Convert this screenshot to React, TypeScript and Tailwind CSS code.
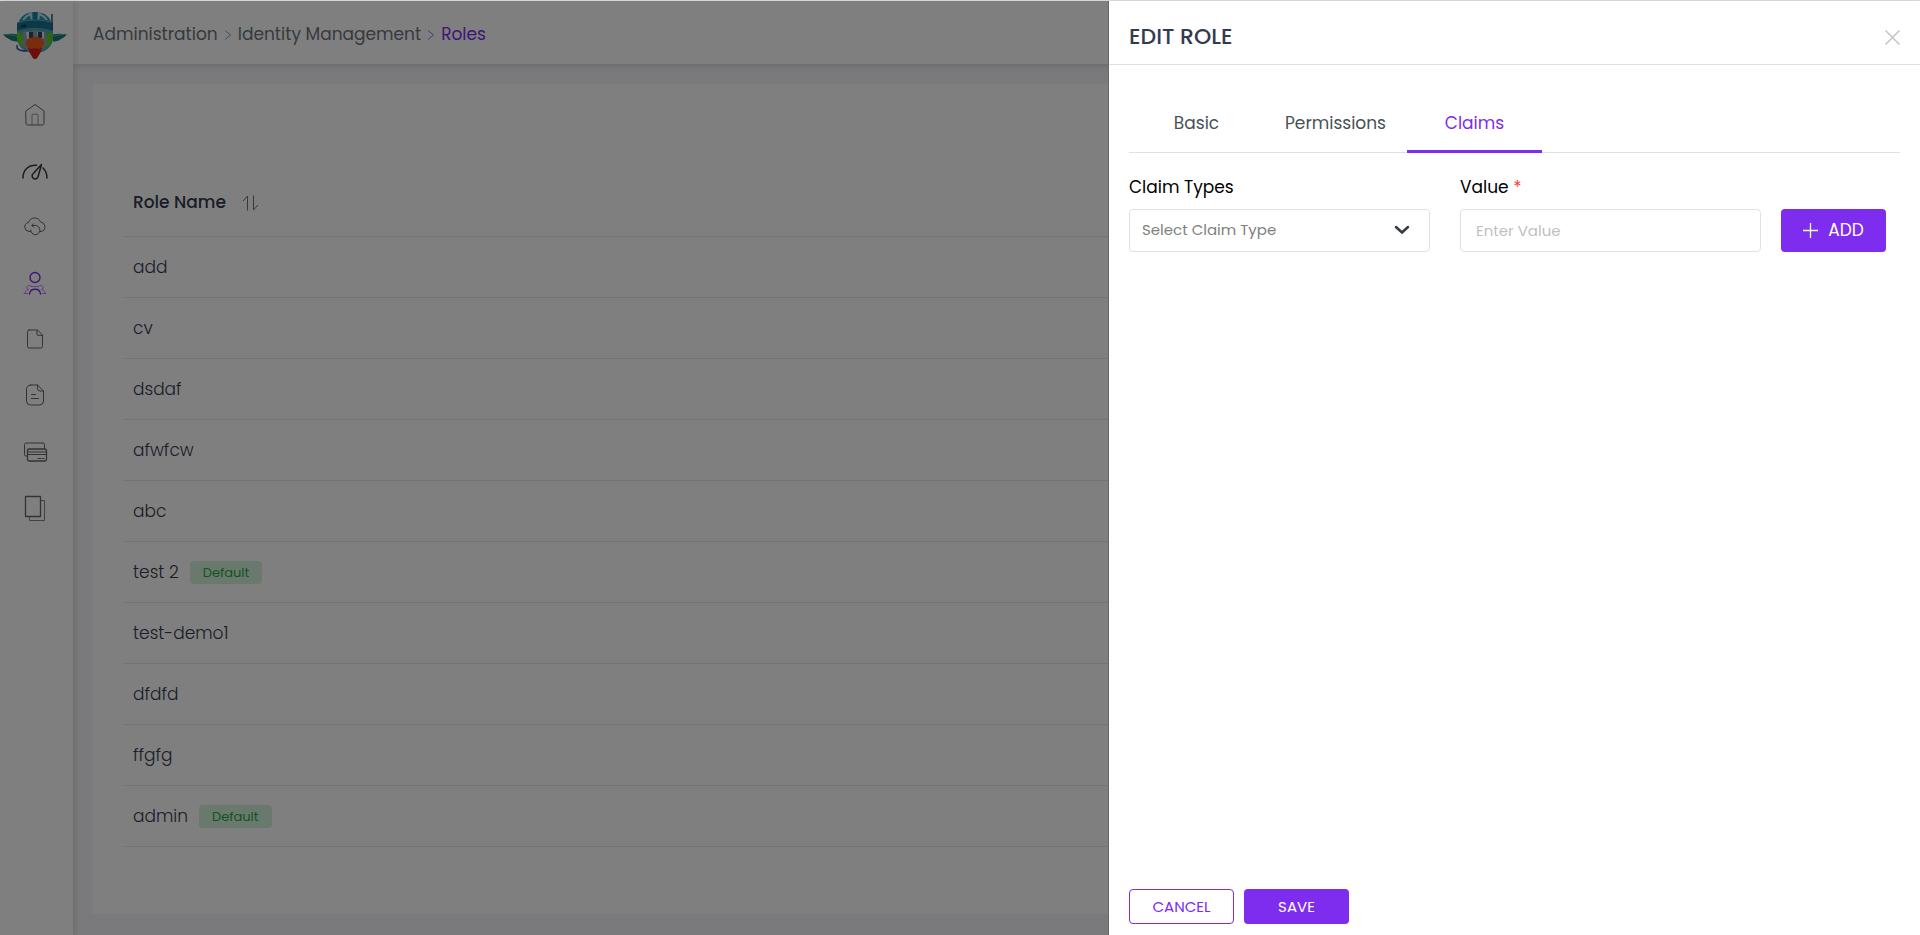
import { useState } from "react";
import type { ReactNode } from "react";

type Role = {
  name: string;
  isDefault?: boolean;
};

const roles: Role[] = [
  { name: "add" },
  { name: "cv" },
  { name: "dsdaf" },
  { name: "afwfcw" },
  { name: "abc" },
  { name: "test 2", isDefault: true },
  { name: "test-demo1" },
  { name: "dfdfd" },
  { name: "ffgfg" },
  { name: "admin", isDefault: true },
];

const tabs = ["Basic", "Permissions", "Claims"];

const navItems: { label: string; active?: boolean; icon: ReactNode }[] = [
  {
    label: "Home",
    icon: (
      <>
        <path d="M3 8 12 1.500l9 6.500V20.500a1.500 1.500 0 0 1-1.500 1.500h-15A1.500 1.500 0 0 1 3 20.500z" />
        <path d="M9 21.500V12a.8.8 0 0 1 .8-.8h4.400a.8.8 0 0 1 .8.8V21.500" opacity=".7" />
      </>
    ),
  },
  {
    label: "Dashboard",
    icon: (
      <g stroke="#383838" strokeWidth="1.500">
        <path d="M0 19C0 11 5 6 13.500 6.300" />
        <path d="M20 9c2.500 2.500 4 6 4 10" />
        <path d="M18.500 5.500 10.300 14.500a3 3 0 1 0 4.700 3.200z" />
      </g>
    ),
  },
  {
    label: "Backups",
    icon: (
      <>
        <path d="M7.500 16.500H6a4.500 4.500 0 0 1-.6-8.900A6.500 6.500 0 0 1 17.600 7 4.800 4.800 0 0 1 18 16.500h-1" />
        <path d="M9 10.500h3.500a4.600 4.600 0 1 1-4.800 4.500M10.500 8.800l-1.700 1.700 1.700 1.700" />
      </>
    ),
  },
  {
    label: "Administration",
    active: true,
    icon: (
      <>
        <circle cx="12" cy="6.500" r="5" strokeWidth="1.400" />
        <path d="M6.500 23c.4-3 2.500-4.700 5.500-4.700s5.100 1.700 5.500 4.700" strokeWidth="1.400" />
        <path
          d="M2 22.500c.3-2.600 1.500-4 3.800-4.200M22 22.500c-.3-2.600-1.500-4-3.800-4.200M4 18a2.500 2.500 0 0 1 4.500-2.300M20 18a2.500 2.500 0 0 0-4.500-2.300M8.500 15.500h7M1 22.500h4M19 22.500h4"
          opacity=".5"
        />
      </>
    ),
  },
  {
    label: "Files",
    icon: (
      <>
        <path d="M6 3h8.500L19.500 8v11.500a1.500 1.500 0 0 1-1.500 1.500H6a1.500 1.500 0 0 1-1.500-1.500v-15A1.500 1.500 0 0 1 6 3z" />
        <path d="M14 3v4.300a1 1 0 0 0 1 1h4.500" />
      </>
    ),
  },
  {
    label: "Documents",
    icon: (
      <>
        <path d="M7.500 2H14.500L20.500 8v10a4 4 0 0 1-4 4h-9a4 4 0 0 1-4-4V6a4 4 0 0 1 4-4z" />
        <path d="M14.500 2v3.500a2.500 2.500 0 0 0 2.500 2.500h3.500" />
        <path d="M8.500 11.500h4M8.500 15.500h7" />
      </>
    ),
  },
  {
    label: "Payments",
    icon: (
      <>
        <path d="M4 17H3a1.500 1.500 0 0 1-1.500-1.500v-10A1.500 1.500 0 0 1 3 4h17a1.500 1.500 0 0 1 1.500 1.500V9" />
        <rect x="4.500" y="10" width="19" height="12" rx="1.500" strokeWidth="1.300" />
        <path d="M4.500 13h19M4.500 15.500h19M15 19.500h3M19.500 19.500h1.500" />
      </>
    ),
  },
  {
    label: "Pages",
    icon: (
      <>
        <path d="M2.500 1.500h15v20h-15z" strokeWidth="1.300" />
        <path d="M17.500 5.500H21.500v20H6.500v-4" opacity=".8" />
      </>
    ),
  },
];

function Logo() {
  return (
    <svg aria-hidden viewBox="0 0 64 48" className="h-12 w-16">
      <path d="M0 22.500c5-1 10-1 16 0l-1 7c-5 0-7-1-9-2.500C3 26 2 24 0 22.500z" fill="#1b7c78" />
      <path d="M64 22.500c-5-1-10-1-15 0l1 7c5 0 6-1 8-2.500 3-1 4-3 6-4.500z" fill="#1b7c78" />
      <path d="M2 22.500c6 0 9 1 13 2M61 22.500c-5 0-8 1-12 2" stroke="#57b7ad" fill="none" />
      <path d="M14 17h36v10c-1 8-8 14-18 14S15 35 14 27z" fill="#4ba6b4" />
      <path d="M14 20c6 1 9 8 8 16-5-2-8-6-8-12zM49 20c-6 1-8 8-7 16 5-2 7-6 7-12z" fill="#5ed015" />
      <path d="M20 20c4-2 20-2 23 0l1 13c-3 4-7 6-12 6s-10-2-13-6z" fill="#8fa3a8" />
      <path d="M23 20h7v7h-6zM34 20h7v6l-6 1z" fill="#dce6ec" />
      <path d="M26 20h4v6h-4zM35 20h4v6h-4z" fill="#2c4660" />
      <path d="M15 14C16 5 22 0 32 0s16 5 17 14z" fill="#2a95b0" />
      <path d="M20 8c2-3 5-5 8-6.500l.5 6M44 8c-2-3-5-5-8-6.500l-.5 6" fill="none" stroke="#b9e4e8" strokeWidth="2" />
      <path d="M32 0v8" stroke="#1b7798" strokeWidth="3" />
      <path d="M14 11c10-4 26-4 36 0v9c-10-4-26-4-36 0z" fill="#1b7090" />
      <path d="M14 11c10-4 26-4 36 0M14 19.500c10-4 26-4 36 0" fill="none" stroke="#4ab6c8" />
      <path d="M18 14.500l5-1" stroke="#102c40" strokeWidth="2" />
      <path d="M49 2v15" stroke="#3f4f88" strokeWidth="1.500" />
      <path d="M14 33v3c2 3 6 3 10 3" stroke="#4b4aa0" fill="none" strokeWidth="1.500" />
      <path d="M25 34h14c0 3-1 6-3 9-2 4-3 4-4 4s-2 0-4-4c-2-3-3-6-3-9z" fill="#d81f14" />
      <path d="M23 32c-1-4 3-7 9-7s10 3 9 7c-1 3-3 4-5 5-3-1-5-1-8 0-2-1-4-2-5-5z" fill="#ee5a1c" />
    </svg>
  );
}

function Sidebar() {
  return (
    <aside className="z-10 flex w-[73px] shrink-0 flex-col bg-white pt-[11px] shadow-[2px_0_6px_rgba(0,0,0,0.12)]">
      <a href="#home" aria-label="Home page" className="flex pl-[3px]">
        <Logo />
      </a>
      <nav aria-label="Main" className="mt-[43px] flex flex-col items-center gap-8 pr-[3px]">
        {navItems.map((item) => (
          <a
            key={item.label}
            href={`#${item.label.toLowerCase()}`}
            aria-label={item.label}
            className={item.active ? "text-[#7e2cee]" : "text-[#666666]"}
          >
            <svg
              aria-hidden
              viewBox="0 0 24 24"
              fill="none"
              stroke="currentColor"
              strokeLinecap="round"
              strokeLinejoin="round"
              className="size-6 overflow-visible"
            >
              {item.icon}
            </svg>
          </a>
        ))}
      </nav>
    </aside>
  );
}

function Crumb() {
  return (
    <svg aria-hidden viewBox="0 0 8 10" className="mx-[6px] h-[10px] w-2" fill="none" stroke="currentColor">
      <path d="M1 .5 6.500 5 1 9.500" opacity=".7" />
    </svg>
  );
}

function RolesPage() {
  return (
    <div className="flex min-w-0 flex-1 flex-col bg-[#f4f4f8]">
      <header className="flex h-[63px] shrink-0 items-center bg-white px-5 pt-1 shadow-[0_2px_6px_rgba(0,0,0,0.12)]">
        <nav aria-label="Breadcrumb" className="flex items-center text-[17px] text-[#6c757d]">
          <a href="#administration">Administration</a>
          <Crumb />
          <a href="#identity">Identity Management</a>
          <span className="flex items-center text-[#7e2cee]">
            <Crumb />
            <a href="#roles">Roles</a>
          </span>
        </nav>
      </header>
      <main className="mx-5 mt-5 mb-[21px] flex-1 bg-white px-[30px] pt-[84px]">
        <table className="w-full border-collapse text-left text-[#343a50]">
          <thead>
            <tr className="h-[68px] border-b border-[#e4e7ea]">
              <th scope="col" className="px-[10px] pt-[2px] font-medium">
                <button type="button" className="flex items-center gap-4 text-[17px]">
                  Role Name
                  <svg aria-hidden viewBox="0 0 17 16" className="h-4 w-[17px]" fill="none" stroke="#6c757d">
                    <path d="M1 6 5.500 1v14.500M11.500.5V15l4.500-5" />
                  </svg>
                </button>
              </th>
            </tr>
          </thead>
          <tbody>
            {roles.map((role) => (
              <tr key={role.name} className="h-[61px] border-b border-[#e4e7ea]">
                <td className="px-[10px] pt-[2px] text-[17px] font-light">
                  <span className="flex items-center gap-[11px]">
                    {role.name}
                    {role.isDefault && (
                      <span className="rounded bg-[#d4f3dc] px-[13px] text-[13px] leading-[23px] font-normal text-[#28a745]">
                        Default
                      </span>
                    )}
                  </span>
                </td>
              </tr>
            ))}
          </tbody>
        </table>
      </main>
    </div>
  );
}

function EditRoleDrawer() {
  const [tab, setTab] = useState("Claims");

  return (
    <section
      role="dialog"
      aria-labelledby="drawer-title"
      className="absolute inset-y-0 right-0 flex w-[42.24%] flex-col bg-white shadow-[-1px_0_0_#666]"
    >
      <header className="flex h-16 shrink-0 items-center justify-between border-b border-[#dee2e6] px-5 pt-2">
        <h2 id="drawer-title" className="text-[22px] font-medium text-[#343a50]">
          EDIT ROLE
        </h2>
        <button type="button" aria-label="Close" className="pt-[2px] text-[#c4c4c4]">
          <svg aria-hidden viewBox="0 0 15 15" className="size-[15px]" fill="none" stroke="currentColor" strokeWidth="1.500">
            <path d="m.5.5 14 14M14.500.5l-14 14" />
          </svg>
        </button>
      </header>

      <div className="flex-1 px-5 pt-7">
        <div role="tablist" className="flex border-b border-[#dee2e6]">
          {tabs.map((name) => (
            <button
              key={name}
              type="button"
              role="tab"
              aria-selected={tab === name}
              onClick={() => setTab(name)}
              className={`-mb-px h-[60px] min-w-[135px] border-b-3 px-[21px] pt-1 text-[17px] ${
                tab === name ? "border-[#7e2cee] text-[#7e2cee]" : "border-transparent text-[#495057]"
              }`}
            >
              {name}
            </button>
          ))}
        </div>

        <form className="mt-[22px] flex items-end pr-[14px]" onSubmit={(e) => e.preventDefault()}>
          <div className="mr-[30px] flex-1">
            <label htmlFor="claim-type" className="block text-[17px] leading-6 text-black">
              Claim Types
            </label>
            <div className="relative mt-[10px]">
              <select
                id="claim-type"
                className="block h-[43px] w-full appearance-none rounded border border-[#dee2e6] bg-white px-3 text-[15px] text-[#808080]"
              >
                <option>Select Claim Type</option>
              </select>
              <svg
                aria-hidden
                viewBox="0 0 16 10"
                className="pointer-events-none absolute top-4 right-5 h-[10px] w-4"
                fill="none"
                stroke="#343a40"
                strokeWidth="2.500"
                strokeLinecap="round"
              >
                <path d="m2 2 6 5.500L14 2" />
              </svg>
            </div>
          </div>
          <div className="mr-5 flex-1">
            <label htmlFor="claim-value" className="block text-[17px] leading-6 text-black">
              Value <span className="text-[#f03a3a]">*</span>
            </label>
            <input
              id="claim-value"
              placeholder="Enter Value"
              className="mt-[10px] block h-[43px] w-full rounded border border-[#dee2e6] px-[15px] text-[15px] placeholder:text-[#bfbfbf]"
            />
          </div>
          <button
            type="submit"
            className="flex h-[43px] w-[105px] items-center justify-center gap-[10px] rounded bg-[#7e2cee] text-[17px] text-white"
          >
            <svg aria-hidden viewBox="0 0 15 15" className="size-[15px]" fill="none" stroke="currentColor" strokeWidth="1.300">
              <path d="M7.500 0v15M0 7.500h15" />
            </svg>
            ADD
          </button>
        </form>
      </div>

      <footer className="flex gap-[10px] px-5 pb-[11px] text-[15px]">
        <button type="button" className="h-[35px] w-[105px] rounded border border-[#7e2cee] pt-px text-[#7e2cee]">
          CANCEL
        </button>
        <button type="button" className="h-[35px] w-[105px] rounded bg-[#7e2cee] pt-px text-white">
          SAVE
        </button>
      </footer>
    </section>
  );
}

export default function App() {
  return (
    <div className="relative flex min-h-screen border-t border-[#dcdcdc] font-[Poppins,Inter,sans-serif]">
      <Sidebar />
      <RolesPage />
      <div className="absolute inset-0 z-20 bg-black/50">
        <EditRoleDrawer />
      </div>
    </div>
  );
}
